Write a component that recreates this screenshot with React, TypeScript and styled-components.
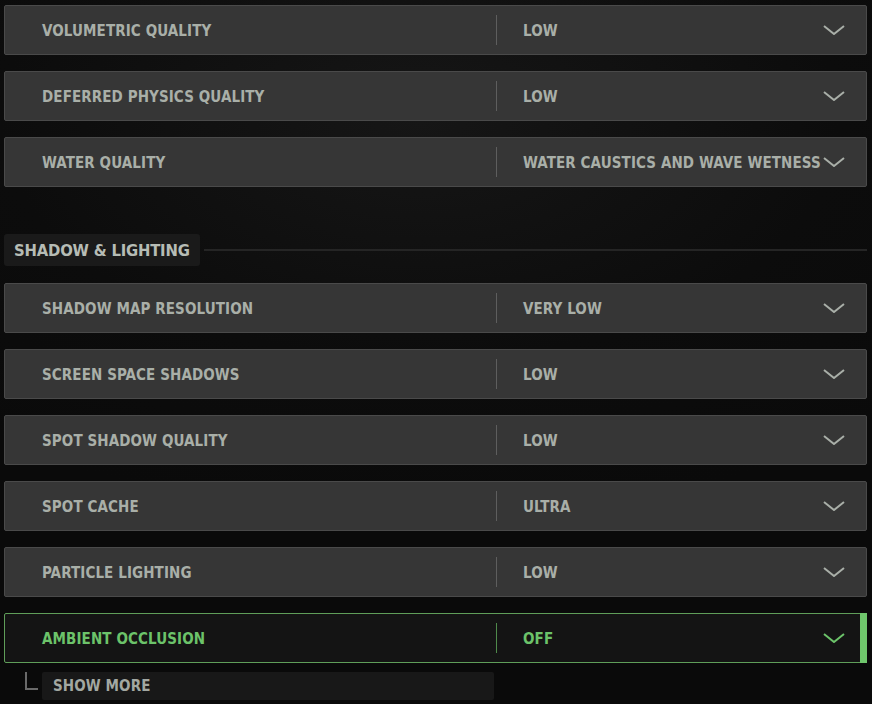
import React from "react";
import styled, { createGlobalStyle, css } from "styled-components";

const Global = createGlobalStyle`
  html, body { margin: 0; padding: 0; }
  body {
    width: 872px;
    height: 704px;
    overflow: hidden;
    background: radial-gradient(ellipse 700px 400px at 420px 120px, #161616 0%, #0c0c0c 60%, #0a0a0a 100%);
    font-family: "DejaVu Sans Condensed", "DejaVu Sans", sans-serif;
  }
`;

const Page = styled.div`
  display: flex;
  flex-direction: column;
  padding: 5px 5px 0 4px;
  width: 863px;
`;

const Group = styled.div`
  display: flex;
  flex-direction: column;
  gap: 16px;
`;

const Row = styled.div<{ $active?: boolean }>`
  position: relative;
  display: grid;
  grid-template-columns: 491px 1fr 44px;
  align-items: center;
  height: 50px;
  box-sizing: border-box;
  border: 1px solid #4a4a4a;
  border-radius: 2px;
  background: #363636;
  color: #a9afa8;
  ${(p) =>
    p.$active &&
    css`
      background: #141414;
      border-color: #5f9e59;
      color: #6cc36a;
      &::after {
        content: "";
        position: absolute;
        right: -1px;
        top: -1px;
        bottom: -1px;
        width: 7px;
        background: #6fc66c;
      }
    `}
`;

const Label = styled.div`
  padding: 2px 0 0 37px;
  font-size: 15px;
  font-weight: bold;
  letter-spacing: 0.1px;
  white-space: nowrap;
`;

const ValueCell = styled.div<{ $active?: boolean }>`
  display: flex;
  align-items: center;
  box-sizing: border-box;
  height: 30px;
  border-left: 1px solid ${(p) => (p.$active ? "#4f8a4b" : "#5e5e5e")};
  padding: 2px 4px 0 26px;
  overflow: hidden;
  font-size: 15px;
  font-weight: bold;
  letter-spacing: 0.1px;
  white-space: nowrap;
`;

const Chevron = styled.svg`
  width: 22px;
  height: 10px;
  justify-self: start;
  margin-left: 1px;
`;

const SectionHead = styled.div`
  display: flex;
  align-items: center;
  gap: 4px;
  margin: 47px 0 17px;
`;

const SectionTitle = styled.div`
  height: 32px;
  width: 196px;
  box-sizing: border-box;
  display: flex;
  align-items: center;
  padding: 1px 0 0 10px;
  background: #1a1a1a;
  border-radius: 3px;
  color: #b6bcb5;
  font-size: 16.5px;
  font-weight: bold;
  letter-spacing: -0.2px;
  white-space: nowrap;
`;

const SectionLine = styled.div`
  flex: 1;
  height: 2px;
  background: #252525;
`;

const ShowMoreRow = styled.div`
  display: flex;
  align-items: flex-start;
  margin-top: 9px;
  padding-left: 21px;
`;

const Elbow = styled.div`
  width: 11px;
  height: 16px;
  border-left: 2px solid #6a6a6a;
  border-bottom: 2px solid #6a6a6a;
`;

const ShowMore = styled.div`
  margin-left: 4px;
  width: 452px;
  height: 28px;
  box-sizing: border-box;
  display: flex;
  align-items: center;
  padding-left: 11px;
  background: #181818;
  border-radius: 2px;
  color: #a3a8a2;
  font-size: 15px;
  font-weight: bold;
  letter-spacing: 0.1px;
`;

type Setting = { label: string; value: string; active?: boolean };

const top: Setting[] = [
  { label: "VOLUMETRIC QUALITY", value: "LOW" },
  { label: "DEFERRED PHYSICS QUALITY", value: "LOW" },
  { label: "WATER QUALITY", value: "WATER CAUSTICS AND WAVE WETNESS" },
];

const shadow: Setting[] = [
  { label: "SHADOW MAP RESOLUTION", value: "VERY LOW" },
  { label: "SCREEN SPACE SHADOWS", value: "LOW" },
  { label: "SPOT SHADOW QUALITY", value: "LOW" },
  { label: "SPOT CACHE", value: "ULTRA" },
  { label: "PARTICLE LIGHTING", value: "LOW" },
  { label: "AMBIENT OCCLUSION", value: "OFF", active: true },
];

function SettingRow({ s }: { s: Setting }) {
  return (
    <Row $active={s.active}>
      <Label>{s.label}</Label>
      <ValueCell $active={s.active}>{s.value}</ValueCell>
      <Chevron viewBox="0 0 22 10">
        <polyline
          points="1,1 11,9 21,1"
          fill="none"
          stroke="currentColor"
          strokeWidth="2"
        />
      </Chevron>
    </Row>
  );
}

export default function App() {
  return (
    <>
      <Global />
      <Page>
        <Group>
          {top.map((s) => (
            <SettingRow key={s.label} s={s} />
          ))}
        </Group>
        <SectionHead>
          <SectionTitle>SHADOW &amp; LIGHTING</SectionTitle>
          <SectionLine />
        </SectionHead>
        <Group>
          {shadow.map((s) => (
            <SettingRow key={s.label} s={s} />
          ))}
        </Group>
        <ShowMoreRow>
          <Elbow />
          <ShowMore>SHOW MORE</ShowMore>
        </ShowMoreRow>
      </Page>
    </>
  );
}
